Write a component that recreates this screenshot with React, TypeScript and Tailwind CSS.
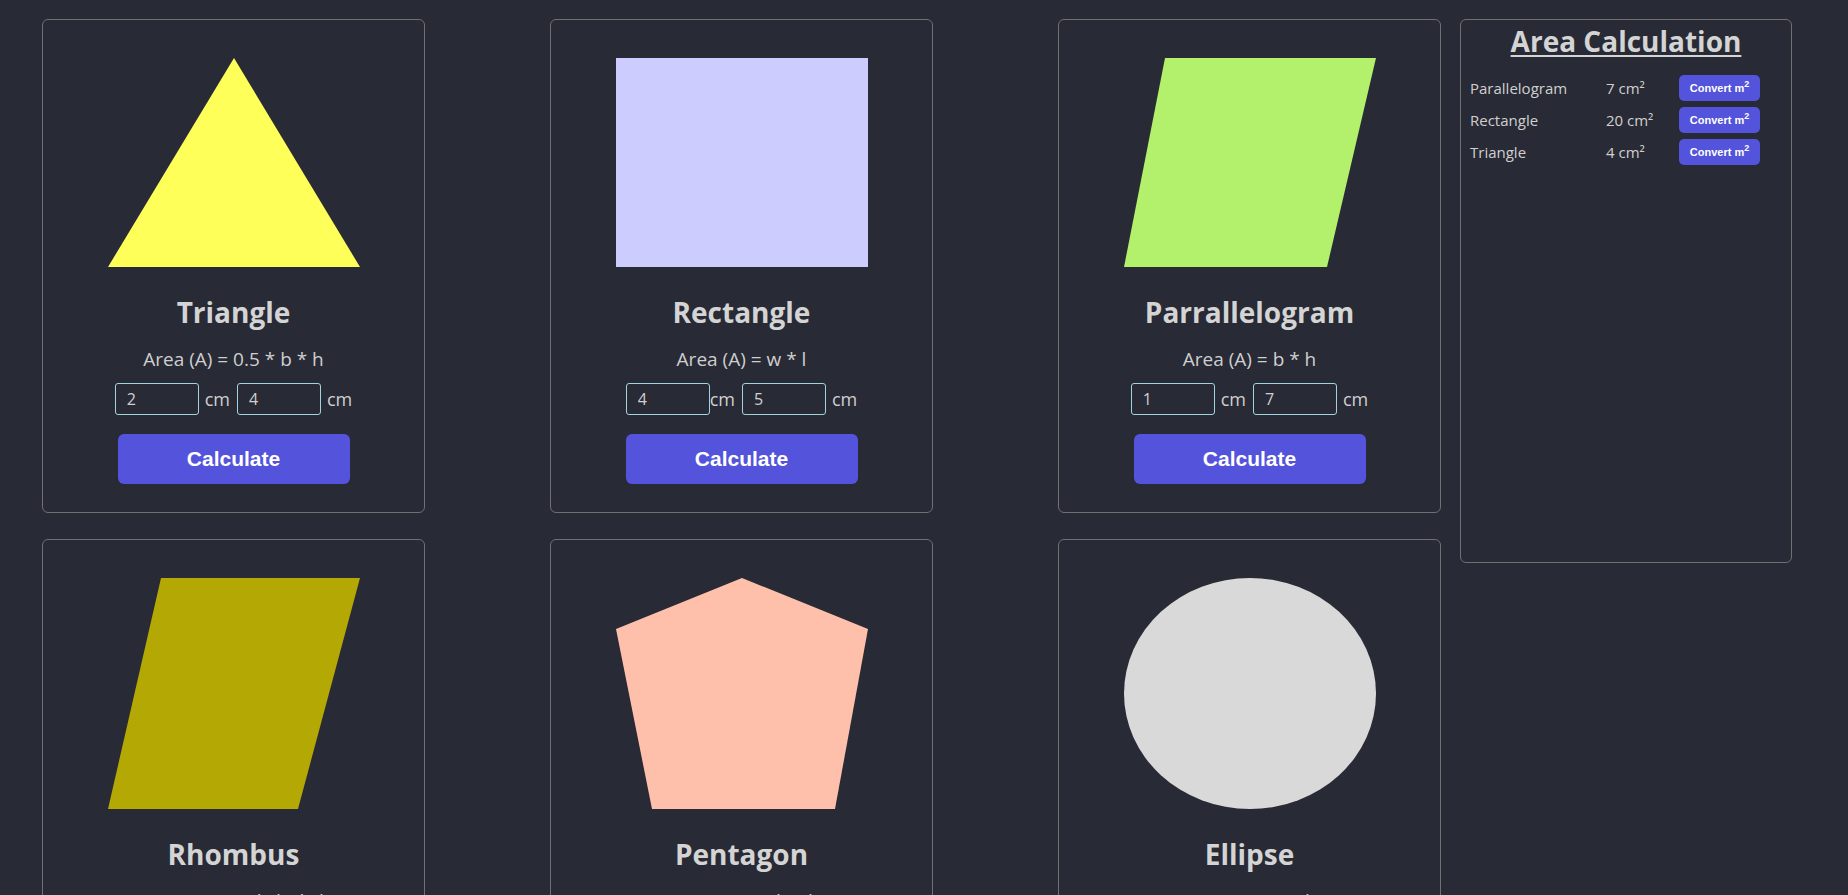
import React from "react";

interface ShapeCard {
  name: string;
  formula: string;
  values: [string, string];
  tight?: boolean;
  height: number;
  drawing: React.ReactNode;
}

const cards: ShapeCard[] = [
  {
    name: "Triangle",
    formula: "Area (A) = 0.5 * b * h",
    values: ["2", "4"],
    height: 209,
    drawing: <polygon points="126,0 252,209 0,209" fill="#ffff5a" />,
  },
  {
    name: "Rectangle",
    formula: "Area (A) = w * l",
    values: ["4", "5"],
    tight: true,
    height: 209,
    drawing: <rect x="0" y="0" width="252" height="209" fill="#ccccff" />,
  },
  {
    name: "Parrallelogram",
    formula: "Area (A) = b * h",
    values: ["1", "7"],
    height: 209,
    drawing: <polygon points="41,0 252,0 203,209 0,209" fill="#b3f06b" />,
  },
  {
    name: "Rhombus",
    formula: "Area (A) = 0.5 * d1 * d2",
    values: ["3", "6"],
    height: 231,
    drawing: <polygon points="53,0 252,0 190,231 0,231" fill="#b4a805" />,
  },
  {
    name: "Pentagon",
    formula: "Area (A) = 0.5 * p * a",
    values: ["5", "4"],
    height: 231,
    drawing: (
      <polygon
        points="126,0 252,51 219,231 36,231 0,51"
        fill="#ffc0ab"
      />
    ),
  },
  {
    name: "Ellipse",
    formula: "Area (A) = π a b",
    values: ["3", "2"],
    height: 231,
    drawing: <ellipse cx="126" cy="115.5" rx="126" ry="115.5" fill="#d9d9d9" />,
  },
];

const results = [
  { shape: "Parallelogram", area: "7 cm²" },
  { shape: "Rectangle", area: "20 cm²" },
  { shape: "Triangle", area: "4 cm²" },
];

const ValueInput: React.FC<{ value: string }> = ({ value }) => (
  <input
    type="text"
    value={value}
    readOnly
    className="w-[84px] h-[32px] rounded-[3px] border border-[#a3d3de] bg-transparent pl-[11px] text-[16px] text-[#d0d0d0] outline-none"
  />
);

const Card: React.FC<{ card: ShapeCard }> = ({ card }) => (
  <div className="flex flex-col items-center rounded-md border border-[#707070] pt-[38px] pb-[28px]">
    <svg
      width="252"
      height={card.height}
      viewBox={`0 0 252 ${card.height}`}
      className="block"
    >
      {card.drawing}
    </svg>
    <h2 className="mt-[27px] text-[28px] leading-[36px] font-bold text-[#d4d4d4]">
      {card.name}
    </h2>
    <p className="mt-[15px] text-[19px] leading-[28px] text-[#cfcfcf]">
      {card.formula}
    </p>
    <div className="mt-[10px] flex items-center text-[18px] leading-[32px] text-[#cfcfcf]">
      <ValueInput value={card.values[0]} />
      <span className={card.tight ? "ml-0 mr-[7px]" : "ml-[6px] mr-[7px]"}>cm</span>
      <ValueInput value={card.values[1]} />
      <span className="ml-[6px]">cm</span>
    </div>
    <button className="mt-[19px] w-[232px] h-[50px] rounded-md bg-[#5453db] text-[21px] font-bold text-white font-['Liberation_Sans',Arial,sans-serif]">
      Calculate
    </button>
  </div>
);

export default function App() {
  return (
    <div className="min-h-screen bg-[#282a36] font-['Open_Sans',sans-serif]">
      <div className="flex items-start gap-[19px] pt-[19px] pl-[42px] pb-10">
        <div className="grid grid-cols-[383px_383px_383px] gap-x-[125px] gap-y-[26px]">
          {cards.map((card) => (
            <Card key={card.name} card={card} />
          ))}
        </div>

        <aside className="w-[332px] h-[544px] rounded-md border border-[#707070] pt-[3px] pl-[9px]">
          <h1 className="text-center text-[28px] leading-[36px] font-bold text-[#d4d4d4] underline underline-offset-[3px] pr-[9px]">
            Area Calculation
          </h1>
          <div className="mt-[16px] flex flex-col gap-[6px]">
            {results.map((r) => (
              <div
                key={r.shape}
                className="grid grid-cols-[136px_73px_81px] items-center h-[26px] text-[15px] text-[#d0d0d0]"
              >
                <span>{r.shape}</span>
                <span>{r.area}</span>
                <button className="h-[26px] rounded-[5px] bg-[#5453db] text-[11px] font-bold text-white font-['Liberation_Sans',Arial,sans-serif]">
                  Convert m<sup className="text-[9px]">2</sup>
                </button>
              </div>
            ))}
          </div>
        </aside>
      </div>
    </div>
  );
}
